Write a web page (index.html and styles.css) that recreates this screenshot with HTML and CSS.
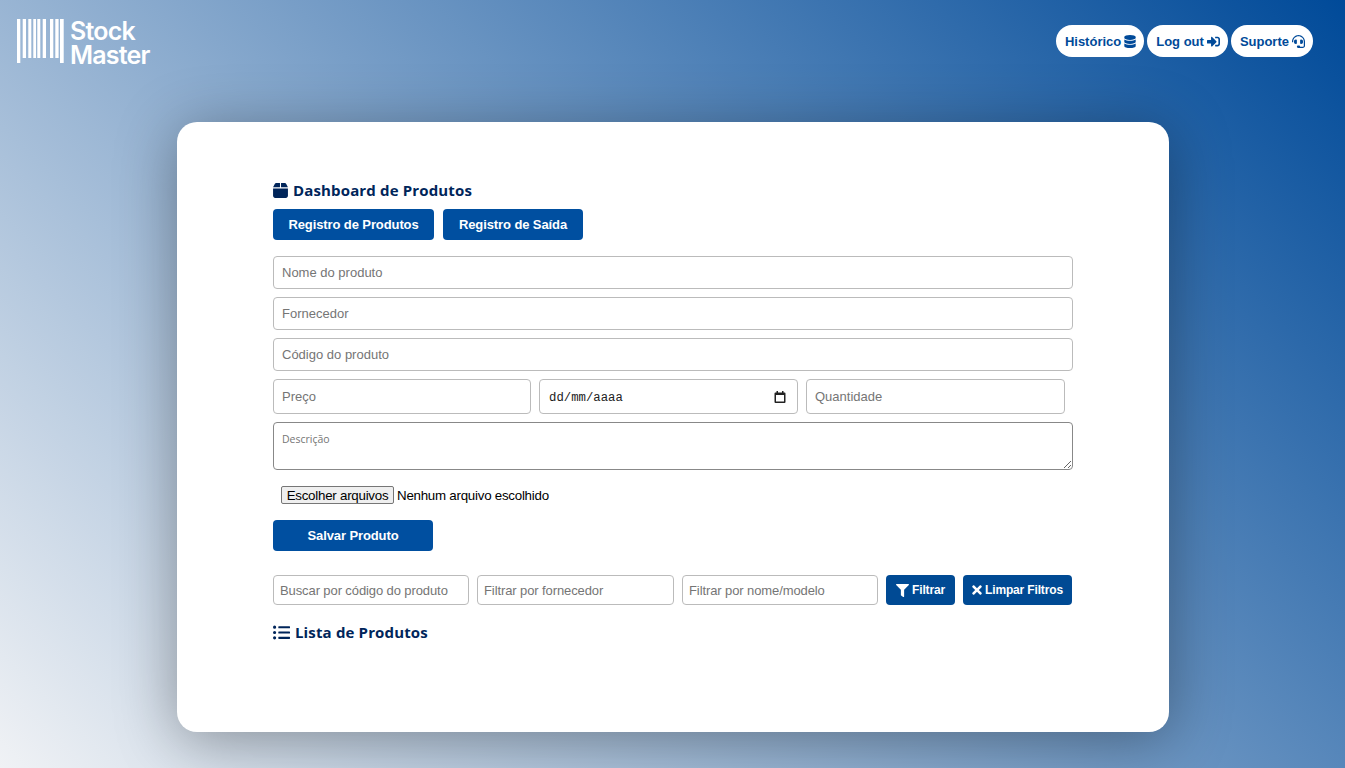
FILE: index.html
```html
<!DOCTYPE html>
<html lang="pt-BR">
<head>
	<meta charset="utf-8">
	<title>Stock Master</title>
	<link rel="stylesheet" href="styles.css">
</head>
<body>
	<header class="topbar">
		<a class="logo" href="#">
			<svg class="logo-bars" viewBox="0 0 47 44" aria-hidden="true">
				<rect x="0" y="0" width="3.300" height="44"/>
				<rect x="5.700" y="0" width="3.300" height="39"/>
				<rect x="11.300" y="0" width="3" height="39"/>
				<rect x="16.300" y="0" width="2.700" height="39"/>
				<rect x="20.300" y="0" width="3" height="39"/>
				<rect x="25.700" y="0" width="3.300" height="39"/>
				<rect x="33" y="0" width="3.300" height="39"/>
				<rect x="38.300" y="0" width="3.300" height="39"/>
				<rect x="43" y="0" width="3.700" height="44"/>
			</svg>
			<span class="logo-text">Stock<br>Master</span>
		</a>
		<nav class="topnav">
			<a class="pill" href="#">Histórico
				<svg class="icon icon-db" viewBox="0 0 448 512"><path d="M448 73.143v45.714C448 159.143 347.667 192 224 192S0 159.143 0 118.857V73.143C0 32.857 100.333 0 224 0s224 32.857 224 73.143zM448 176v102.857C448 319.143 347.667 352 224 352S0 319.143 0 278.857V176c48.125 33.143 136.208 48.572 224 48.572S399.874 209.143 448 176zm0 160v102.857C448 479.143 347.667 512 224 512S0 479.143 0 438.857V336c48.125 33.143 136.208 48.572 224 48.572S399.874 369.143 448 336z"/></svg>
			</a>
			<a class="pill" href="#">Log out
				<svg class="icon" viewBox="0 0 512 512"><path d="M416 448h-84c-6.6 0-12-5.4-12-12v-40c0-6.6 5.4-12 12-12h84c17.7 0 32-14.3 32-32V160c0-17.7-14.3-32-32-32h-84c-6.6 0-12-5.4-12-12V76c0-6.6 5.4-12 12-12h84c53 0 96 43 96 96v192c0 53-43 96-96 96zm-47-201L201 79c-15-15-41-4.5-41 17v96H24c-13.3 0-24 10.7-24 24v96c0 13.3 10.7 24 24 24h136v96c0 21.5 26 32 41 17l168-168c9.3-9.4 9.3-24.6 0-34z"/></svg>
			</a>
			<a class="pill" href="#">Suporte
				<svg class="icon" viewBox="0 0 512 512"><path d="M192 208c0-17.67-14.33-32-32-32h-16c-35.35 0-64 28.65-64 64v48c0 35.35 28.65 64 64 64h16c17.67 0 32-14.33 32-32V208zm176 144c35.35 0 64-28.65 64-64v-48c0-35.35-28.65-64-64-64h-16c-17.67 0-32 14.33-32 32v112c0 17.67 14.33 32 32 32h16zM256 0C113.18 0 4.58 118.83 0 256v16c0 8.84 7.16 16 16 16h16c8.84 0 16-7.16 16-16v-16c0-114.69 93.31-208 208-208s208 93.31 208 208h-.12c.08 2.43.12 165.72.12 165.72 0 23.35-18.93 42.28-42.28 42.28H320c0-26.51-21.49-48-48-48h-32c-26.51 0-48 21.49-48 48s21.49 48 48 48h181.72c49.86 0 90.28-40.42 90.28-90.28V256C507.42 118.83 398.82 0 256 0z"/></svg>
			</a>
		</nav>
	</header>

	<main class="card">
		<div class="content">
			<h2 class="section-title">
				<svg class="title-icon title-icon-box" viewBox="0 0 448 512"><path d="M50.700 58.500L0 160H208V32H93.700C75.500 32 58.900 42.300 50.700 58.500zM240 160H448L397.300 58.500C389.100 42.300 372.500 32 354.300 32H240V160zm208 32H0V416c0 35.300 28.700 64 64 64H384c35.300 0 64-28.700 64-64V192z"/></svg>
				Dashboard de Produtos
			</h2>
			<div class="tabs">
				<button class="btn btn-tab-one">Registro de Produtos</button>
				<button class="btn btn-tab-two">Registro de Saída</button>
			</div>

			<form class="product-form">
				<input class="field" type="text" placeholder="Nome do produto">
				<input class="field" type="text" placeholder="Fornecedor">
				<input class="field" type="text" placeholder="Código do produto">
				<div class="field-row">
					<input class="field field-tall" type="text" placeholder="Preço">
					<div class="date-field">
						<span class="date-text">dd/mm/aaaa</span>
						<svg class="date-icon" viewBox="0 0 12 12"><path d="M2.500 0h1.500v1.500h4V0h1.500v1.500h1A1 1 0 0 1 11.500 2.500v8.500a1 1 0 0 1-1 1h-9a1 1 0 0 1-1-1V2.500a1 1 0 0 1 1-1h1zM2 4v6.500h8V4z"/></svg>
					</div>
					<input class="field field-tall" type="text" placeholder="Quantidade">
				</div>
				<textarea class="field-area" placeholder="Descrição"></textarea>
				<div class="file-row">
					<button class="file-btn" type="button">Escolher arquivos</button>
					<span class="file-name">Nenhum arquivo escolhido</span>
				</div>
				<button class="btn btn-save" type="button">Salvar Produto</button>
			</form>

			<div class="filters">
				<input class="field filter-input" type="text" placeholder="Buscar por código do produto">
				<input class="field filter-input filter-input-wide" type="text" placeholder="Filtrar por fornecedor">
				<input class="field filter-input" type="text" placeholder="Filtrar por nome/modelo">
				<button class="btn-filter btn-filter-go">
					<svg class="icon" viewBox="0 0 512 512"><path d="M487.976 0H24.028C2.71 0-8.047 25.866 7.058 40.971L192 225.941V432c0 7.831 3.821 15.170 10.237 19.662l80 55.980C298.020 518.690 320 507.493 320 487.980V225.941l184.947-184.970C520.021 25.896 509.338 0 487.976 0z"/></svg>
					Filtrar
				</button>
				<button class="btn-filter btn-filter-clear">
					<svg class="icon icon-x" viewBox="0 0 352 512"><path d="M242.720 256l100.070-100.070c12.280-12.280 12.280-32.190 0-44.480l-22.240-22.240c-12.280-12.280-32.190-12.280-44.480 0L176 189.280 75.930 89.210c-12.280-12.280-32.190-12.280-44.480 0L9.210 111.450c-12.280 12.280-12.280 32.190 0 44.480L109.280 256 9.210 356.070c-12.280 12.280-12.280 32.190 0 44.480l22.240 22.240c12.280 12.280 32.200 12.280 44.480 0L176 322.720l100.070 100.070c12.280 12.280 32.200 12.280 44.480 0l22.240-22.240c12.280-12.280 12.280-32.190 0-44.480L242.720 256z"/></svg>
					Limpar Filtros
				</button>
			</div>

			<h2 class="section-title section-title-list">
				<svg class="title-icon" viewBox="0 0 512 512"><path d="M48 48a48 48 0 1 0 48 48 48 48 0 0 0-48-48zm0 160a48 48 0 1 0 48 48 48 48 0 0 0-48-48zm0 160a48 48 0 1 0 48 48 48 48 0 0 0-48-48zm448 16H176a16 16 0 0 0-16 16v32a16 16 0 0 0 16 16h320a16 16 0 0 0 16-16v-32a16 16 0 0 0-16-16zm0-320H176a16 16 0 0 0-16 16v32a16 16 0 0 0 16 16h320a16 16 0 0 0 16-16V80a16 16 0 0 0-16-16zm0 160H176a16 16 0 0 0-16 16v32a16 16 0 0 0 16 16h320a16 16 0 0 0 16-16v-32a16 16 0 0 0-16-16z"/></svg>
				Lista de Produtos
			</h2>
		</div>
	</main>
</body>
</html>
```

FILE: styles.css
```css
* {
	box-sizing: border-box;
}
html, body {
	height: 100%;
}
body {
	margin: 0;
	overflow: hidden;
	font-family: 'Liberation Sans', Arial, sans-serif;
	background: linear-gradient(45deg, #f0f2f5, #004a99);
}

/* top bar */
.topbar {
	display: flex;
	justify-content: space-between;
	align-items: flex-start;
	height: 122px;
	padding: 19px 32px 0 17px;
}
.logo {
	display: flex;
	color: white;
	text-decoration: none;
}
.logo-bars {
	width: 47px;
	height: 44px;
	fill: white;
}
.logo-text {
	margin-left: 6px;
	font-family: Inter, sans-serif;
	font-weight: 600;
	font-size: 25px;
	letter-spacing: -0.8px;
	line-height: 24px;
}
.topnav {
	display: flex;
	gap: 3px;
	margin-top: 6px;
}
.pill {
	display: flex;
	align-items: center;
	gap: 3px;
	height: 32px;
	padding: 0 8px 0 9px;
	border-radius: 16px;
	background-color: white;
	color: #004a99;
	font-size: 13px;
	font-weight: 700;
	text-decoration: none;
}
.icon {
	width: 13px;
	height: 13px;
	fill: currentColor;
}
.icon-db {
	width: 12px;
}

/* card */
.card {
	width: 992px;
	height: 610px;
	margin-left: 177px;
	border-radius: 20px;
	background-color: white;
	box-shadow: 0 8px 60px rgba(0, 0, 0, 0.35);
}
.content {
	width: 800px;
	margin: 0 auto;
	padding-top: 58px;
}
.section-title {
	display: flex;
	align-items: center;
	gap: 5px;
	margin: 0;
	height: 20px;
	color: #00255a;
	font-family: 'Open Sans', sans-serif;
	font-size: 15px;
	font-weight: 700;
	letter-spacing: 0.15px;
}
.title-icon {
	width: 16px;
	height: 16px;
	fill: currentColor;
}
.title-icon-box {
	width: 15px;
	height: 17px;
}

/* buttons */
.tabs {
	display: flex;
	gap: 9px;
	margin-top: 9px;
	margin-bottom: 16px;
}
.btn {
	height: 31px;
	border: none;
	border-radius: 4px;
	background-color: #004fa0;
	color: white;
	font-family: inherit;
	font-size: 13px;
	font-weight: 700;
	letter-spacing: -0.1px;
}
.btn-tab-one {
	width: 161px;
}
.btn-tab-two {
	width: 140px;
}
.btn-save {
	width: 160px;
	margin-top: 16px;
}

/* form */
.product-form {
	display: flex;
	flex-direction: column;
	align-items: flex-start;
}
.field {
	width: 100%;
	height: 33px;
	margin-bottom: 8px;
	padding: 0 8px;
	border: 1px solid #bbb;
	border-radius: 4px;
	font-family: inherit;
	font-size: 13px;
}
.field::placeholder {
	color: #757575;
}
.field-row {
	display: grid;
	grid-template-columns: 258px 259px 259px;
	gap: 8px;
	margin-bottom: 8px;
}
.field-tall {
	height: 35px;
	margin-bottom: 0;
}
.date-field {
	display: flex;
	align-items: center;
	justify-content: space-between;
	height: 35px;
	padding: 0 11px 0 9px;
	border: 1px solid #bbb;
	border-radius: 4px;
}
.date-text {
	padding-top: 2px;
	color: #222;
	font-family: 'Liberation Mono', monospace;
	font-size: 12.3px;
}
.date-icon {
	width: 12px;
	height: 12px;
	fill: #222;
}
.field-area {
	width: 100%;
	height: 48px;
	padding: 9px 8px;
	border: 1px solid #888;
	border-radius: 4px;
	font-family: 'Open Sans', sans-serif;
	font-size: 10.5px;
}
.field-area::placeholder {
	color: #757575;
}
.file-row {
	display: flex;
	align-items: center;
	gap: 3px;
	margin-top: 16px;
	padding-left: 8px;
	font-size: 13.33px;
	letter-spacing: -0.25px;
}
.file-btn {
	width: 113px;
	height: 18px;
	padding: 0;
	border: 1px solid #767676;
	border-radius: 2px;
	background-color: #efefef;
	color: black;
	font-family: inherit;
	font-size: 13.33px;
	letter-spacing: -0.25px;
}
.file-name {
	color: black;
}

/* filters */
.filters {
	display: flex;
	gap: 8px;
	margin-top: 24px;
}
.filter-input {
	flex: none;
	width: 196px;
	height: 30px;
	margin-bottom: 0;
	padding: 0 6px;
	letter-spacing: -0.1px;
}
.filter-input-wide {
	width: 197px;
}
.btn-filter {
	display: flex;
	align-items: center;
	justify-content: center;
	gap: 3px;
	height: 30px;
	border: none;
	border-radius: 4px;
	background-color: #004a94;
	color: white;
	font-family: inherit;
	font-size: 12px;
	font-weight: 700;
	letter-spacing: -0.15px;
}
.btn-filter-go {
	width: 69px;
}
.btn-filter-clear {
	width: 109px;
}
.icon-x {
	width: 10px;
	height: 14px;
}
.section-title-list {
	margin-top: 17px;
}
.section-title-list .title-icon {
	width: 17px;
	height: 17px;
}
```
